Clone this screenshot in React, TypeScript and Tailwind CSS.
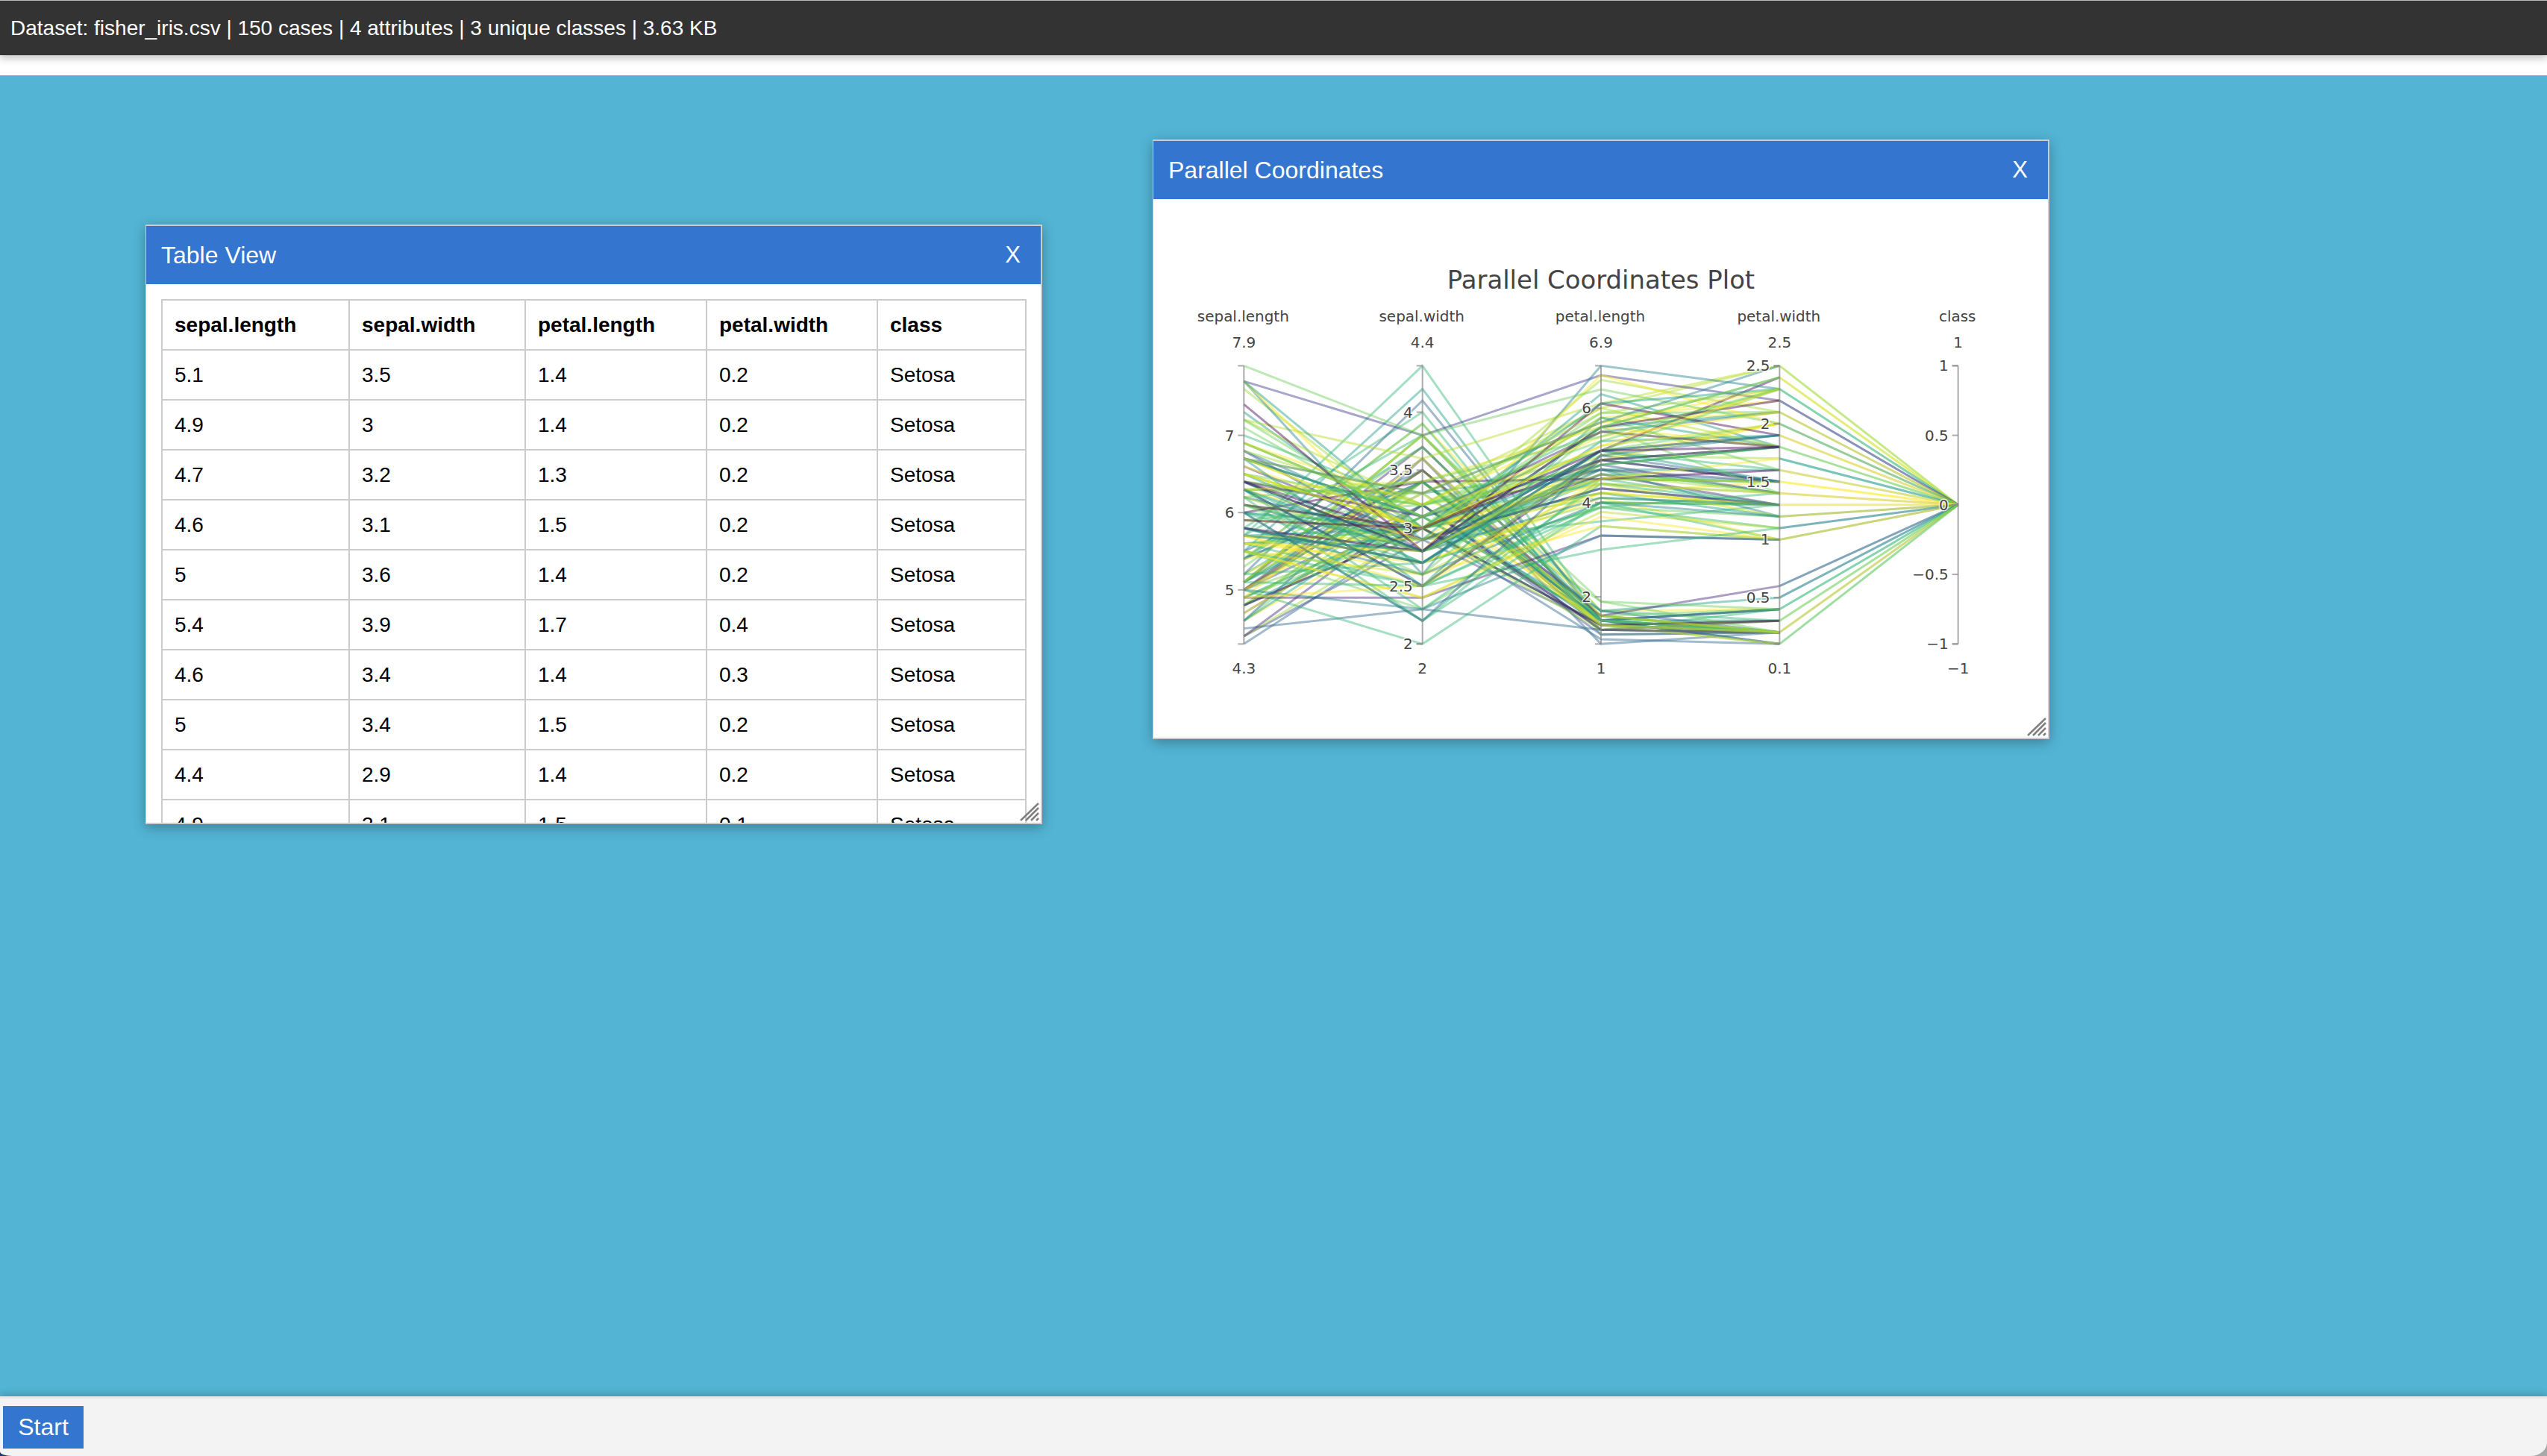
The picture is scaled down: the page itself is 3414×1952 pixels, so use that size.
const IRIS = `5.1,3.5,1.4,0.2 4.9,3,1.4,0.2 4.7,3.2,1.3,0.2 4.6,3.1,1.5,0.2 5,3.6,1.4,0.2 5.4,3.9,1.7,0.4 4.6,3.4,1.4,0.3 5,3.4,1.5,0.2 4.4,2.9,1.4,0.2 4.9,3.1,1.5,0.1 5.4,3.7,1.5,0.2 4.8,3.4,1.6,0.2 4.8,3,1.4,0.1 4.3,3,1.1,0.1 5.8,4,1.2,0.2 5.7,4.4,1.5,0.4 5.4,3.9,1.3,0.4 5.1,3.5,1.4,0.3 5.7,3.8,1.7,0.3 5.1,3.8,1.5,0.3 5.4,3.4,1.7,0.2 5.1,3.7,1.5,0.4 4.6,3.6,1,0.2 5.1,3.3,1.7,0.5 4.8,3.4,1.9,0.2 5,3,1.6,0.2 5,3.4,1.6,0.4 5.2,3.5,1.5,0.2 5.2,3.4,1.4,0.2 4.7,3.2,1.6,0.2 4.8,3.1,1.6,0.2 5.4,3.4,1.5,0.4 5.2,4.1,1.5,0.1 5.5,4.2,1.4,0.2 4.9,3.1,1.5,0.2 5,3.2,1.2,0.2 5.5,3.5,1.3,0.2 4.9,3.6,1.4,0.1 4.4,3,1.3,0.2 5.1,3.4,1.5,0.2 5,3.5,1.3,0.3 4.5,2.3,1.3,0.3 4.4,3.2,1.3,0.2 5,3.5,1.6,0.6 5.1,3.8,1.9,0.4 4.8,3,1.4,0.3 5.1,3.8,1.6,0.2 4.6,3.2,1.4,0.2 5.3,3.7,1.5,0.2 5,3.3,1.4,0.2 7,3.2,4.7,1.4 6.4,3.2,4.5,1.5 6.9,3.1,4.9,1.5 5.5,2.3,4,1.3 6.5,2.8,4.6,1.5 5.7,2.8,4.5,1.3 6.3,3.3,4.7,1.6 4.9,2.4,3.3,1 6.6,2.9,4.6,1.3 5.2,2.7,3.9,1.4 5,2,3.5,1 5.9,3,4.2,1.5 6,2.2,4,1 6.1,2.9,4.7,1.4 5.6,2.9,3.6,1.3 6.7,3.1,4.4,1.4 5.6,3,4.5,1.5 5.8,2.7,4.1,1 6.2,2.2,4.5,1.5 5.6,2.5,3.9,1.1 5.9,3.2,4.8,1.8 6.1,2.8,4,1.3 6.3,2.5,4.9,1.5 6.1,2.8,4.7,1.2 6.4,2.9,4.3,1.3 6.6,3,4.4,1.4 6.8,2.8,4.8,1.4 6.7,3,5,1.7 6,2.9,4.5,1.5 5.7,2.6,3.5,1 5.5,2.4,3.8,1.1 5.5,2.4,3.7,1 5.8,2.7,3.9,1.2 6,2.7,5.1,1.6 5.4,3,4.5,1.5 6,3.4,4.5,1.6 6.7,3.1,4.7,1.5 6.3,2.3,4.4,1.3 5.6,3,4.1,1.3 5.5,2.5,4,1.3 5.5,2.6,4.4,1.2 6.1,3,4.6,1.4 5.8,2.6,4,1.2 5,2.3,3.3,1 5.6,2.7,4.2,1.3 5.7,3,4.2,1.2 5.7,2.9,4.2,1.3 6.2,2.9,4.3,1.3 5.1,2.5,3,1.1 5.7,2.8,4.1,1.3 6.3,3.3,6,2.5 5.8,2.7,5.1,1.9 7.1,3,5.9,2.1 6.3,2.9,5.6,1.8 6.5,3,5.8,2.2 7.6,3,6.6,2.1 4.9,2.5,4.5,1.7 7.3,2.9,6.3,1.8 6.7,2.5,5.8,1.8 7.2,3.6,6.1,2.5 6.5,3.2,5.1,2 6.4,2.7,5.3,1.9 6.8,3,5.5,2.1 5.7,2.5,5,2 5.8,2.8,5.1,2.4 6.4,3.2,5.3,2.3 6.5,3,5.5,1.8 7.7,3.8,6.7,2.2 7.7,2.6,6.9,2.3 6,2.2,5,1.5 6.9,3.2,5.7,2.3 5.6,2.8,4.9,2 7.7,2.8,6.7,2 6.3,2.7,4.9,1.8 6.7,3.3,5.7,2.1 7.2,3.2,6,1.8 6.2,2.8,4.8,1.8 6.1,3,4.9,1.8 6.4,2.8,5.6,2.1 7.2,3,5.8,1.6 7.4,2.8,6.1,1.9 7.9,3.8,6.4,2 6.4,2.8,5.6,2.2 6.3,2.8,5.1,1.5 6.1,2.6,5.6,1.4 7.7,3,6.1,2.3 6.3,3.4,5.6,2.4 6.4,3.1,5.5,1.8 6,3,4.8,1.8 6.9,3.1,5.4,2.1 6.7,3.1,5.6,2.4 6.9,3.1,5.1,2.3 5.8,2.7,5.1,1.9 6.8,3.2,5.9,2.3 6.7,3.3,5.7,2.5 6.7,3,5.2,2.3 6.3,2.5,5,1.9 6.5,3,5.2,2 6.2,3.4,5.4,2.3 5.9,3,5.1,1.8`
  .split(" ")
  .map((r) => r.split(",").map(Number));

const PALETTE = [
  "#440154", "#482878", "#3e4989", "#31688e", "#26828e", "#26828e", "#1f9e89", "#1f9e89", "#35b779", "#35b779",
  "#35b779", "#6ece58", "#6ece58", "#6ece58", "#a0da39", "#b5de2b", "#d0e11c", "#fde725", "#fde725", "#fde725",
];
const OVERRIDE: Record<number, string> = { 117: "#3e3a89", 131: "#6ece58", 118: "#26828e", 41: "#31688e", 15: "#35b779", 33: "#1f9e89", 100: "#b5de2b", 109: "#b5de2b", 60: "#35b779", 13: "#31688e" };

// Colour of the visible line from each petal.width value to the class axis.
const FAN: [number, string][] = [
  [2.5, "#a0da39"], [2.4, "#d0e11c"], [2.3, "#35b779"], [2.2, "#3e4989"], [2.1, "#b5c52b"], [2, "#4fae5a"], [1.9, "#d8d030"],
  [1.8, "#6ece58"], [1.7, "#1f9e89"], [1.6, "#c9cf35"], [1.5, "#fde725"], [1.4, "#d8cf30"], [1.3, "#e6e23a"], [1.2, "#a0b82b"],
  [1.1, "#26828e"], [1, "#a8b91f"], [0.6, "#31688e"], [0.5, "#26828e"], [0.4, "#35b779"], [0.3, "#6ece58"], [0.2, "#b5c52b"], [0.1, "#5ec962"],
];

let seed = 20231;
const rnd = () => {
  seed = (seed * 1103515245 + 12345) & 0x7fffffff;
  return (seed >> 8) / 0x7fffff;
};
const lines = IRIS.map((row, i) => {
  const v = rnd();
  return { row, color: OVERRIDE[i] ?? PALETTE[Math.min(19, Math.floor(v * 20))] };
});

const AX = [120, 360, 600, 840, 1080];
const TOP = 224;
const BOT = 598;
const RANGES = [
  [4.3, 7.9],
  [2, 4.4],
  [1, 6.9],
  [0.1, 2.5],
  [-1, 1],
];
const yOf = (a: number, v: number) => BOT - ((v - RANGES[a][0]) / (RANGES[a][1] - RANGES[a][0])) * (BOT - TOP);

const AXES = [
  { name: "sepal.length", hi: "7.9", lo: "4.3", ticks: [[5, "5"], [6, "6"], [7, "7"]] },
  { name: "sepal.width", hi: "4.4", lo: "2", ticks: [[2, "2"], [2.5, "2.5"], [3, "3"], [3.5, "3.5"], [4, "4"]] },
  { name: "petal.length", hi: "6.9", lo: "1", ticks: [[2, "2"], [4, "4"], [6, "6"]] },
  { name: "petal.width", hi: "2.5", lo: "0.1", ticks: [[0.5, "0.5"], [1, "1"], [1.5, "1.5"], [2, "2"], [2.5, "2.5"]] },
  { name: "class", hi: "1", lo: "\u22121", ticks: [[-1, "\u22121"], [-0.5, "\u22120.5"], [0, "0"], [0.5, "0.5"], [1, "1"]] },
] as { name: string; hi: string; lo: string; ticks: [number, string][] }[];

const COLS = ["sepal.length", "sepal.width", "petal.length", "petal.width", "class"];
const WIDTHS = ["w-[251px]", "w-[236px]", "w-[243px]", "w-[229px]", "w-[199px]"];

function Handle() {
  return (
    <svg className="absolute right-0 bottom-0 h-[28px] w-[28px]" viewBox="0 0 28 28" fill="none" stroke="#808080" strokeWidth="2.5">
      <path d="M1 25 L25 2 M8 25 L25 8 M15 25 L25 15 M22 25 L25 22" />
    </svg>
  );
}

function TitleBar({ title }: { title: string }) {
  return (
    <div className="flex h-[78px] shrink-0 items-center justify-between bg-[#3475d0] pr-[27px] pl-[20px] text-[32px] text-white">
      <span>{title}</span>
      <span className="text-[31px]">X</span>
    </div>
  );
}

function ParCoords() {
  return (
    <svg className="block h-[724px] w-[1199px]" viewBox="0 0 1199 724" style={{ fontFamily: "'DejaVu Sans', Verdana, sans-serif" }}>
      <text x="600" y="120" textAnchor="middle" fontSize="34" fill="#444">
        Parallel Coordinates Plot
      </text>
      <g fill="none" strokeWidth="3" strokeOpacity="0.45">
        {lines.map((l, i) => (
          <polyline key={i} stroke={l.color} points={[0, 1, 2, 3].map((a) => `${AX[a]},${yOf(a, l.row[a])}`).join(" ")} />
        ))}
        {FAN.map(([v, c]) => (
          <line key={v} x1={AX[3]} y1={yOf(3, v)} x2={AX[4]} y2={yOf(4, 0)} stroke={c} strokeOpacity="0.6" />
        ))}
      </g>
      {AXES.map((ax, a) => (
        <g key={ax.name} fontSize="20" fill="#444">
          <line x1={AX[a]} x2={AX[a]} y1={TOP} y2={BOT} stroke="#888" strokeOpacity="0.7" strokeWidth="2" />
          <line x1={AX[a] - 8} x2={AX[a]} y1={TOP} y2={TOP} stroke="#888" strokeOpacity="0.7" strokeWidth="2" />
          <line x1={AX[a] - 8} x2={AX[a]} y1={BOT} y2={BOT} stroke="#888" strokeOpacity="0.7" strokeWidth="2" />
          <text x={AX[a] - 1} y="164" textAnchor="middle">{ax.name}</text>
          <text x={AX[a]} y="200" textAnchor="middle">{ax.hi}</text>
          <text x={AX[a]} y="638" textAnchor="middle">{ax.lo}</text>
          {ax.ticks.map(([v, label]) => (
            <g key={label}>
              <line x1={AX[a] - 8} x2={AX[a]} y1={yOf(a, v)} y2={yOf(a, v)} stroke="#888" strokeOpacity="0.7" strokeWidth="2" />
              <text x={AX[a] - 13} y={yOf(a, v) + 7} textAnchor="end" stroke="#fff" strokeOpacity="0.8" strokeWidth="3" className="[paint-order:stroke]">
                {label}
              </text>
            </g>
          ))}
        </g>
      ))}
    </svg>
  );
}

export default function App() {
  return (
    <div className="relative flex h-[1952px] w-[3414px] flex-col overflow-hidden bg-white font-['Liberation_Sans',Arial,sans-serif]">
      <div className="absolute bottom-0 left-0 h-[10px] w-[24px] bg-[#1e3a70]" />
      <div className="absolute right-0 bottom-0 h-[24px] w-[28px] bg-[#aaa]" />
      <div className="z-10 flex h-[74px] shrink-0 items-center border-t border-[#bbb] bg-[#333] pl-[14px] text-[28px] text-white shadow-[0_4px_10px_rgba(0,0,0,0.25)]">
        Dataset: fisher_iris.csv | 150 cases | 4 attributes | 3 unique classes | 3.63 KB
      </div>
      <div className="h-[27px] shrink-0 bg-white" />
      <main className="relative flex-1 bg-[#53b4d4]">
        <section className="absolute top-[200px] left-[195px] flex h-[804px] w-[1202px] flex-col overflow-hidden border-2 border-l border-[#ccc] bg-white shadow-[0_4px_16px_rgba(0,0,0,0.3)]">
          <TitleBar title="Table View" />
          <div className="overflow-hidden p-[20px] pr-0">
            <table className="table-fixed border-collapse text-[28px] text-black">
              <thead>
                <tr className="h-[67px]">
                  {COLS.map((c, i) => (
                    <th key={c} className={`${WIDTHS[i]} border-2 border-[#ccc] pl-[16px] text-left font-bold`}>
                      {c}
                    </th>
                  ))}
                </tr>
              </thead>
              <tbody>
                {IRIS.slice(0, 11).map((r, i) => (
                  <tr key={i} className="h-[67px]">
                    {r.map((v, j) => (
                      <td key={j} className="border-2 border-[#ccc] pl-[16px]">{v}</td>
                    ))}
                    <td className="border-2 border-[#ccc] pl-[16px]">Setosa</td>
                  </tr>
                ))}
              </tbody>
            </table>
          </div>
          <Handle />
        </section>
        <section className="absolute top-[86px] left-[1545px] flex h-[804px] w-[1202px] flex-col overflow-hidden border-2 border-l border-[#ccc] bg-white shadow-[0_4px_16px_rgba(0,0,0,0.3)]">
          <TitleBar title="Parallel Coordinates" />
          <ParCoords />
          <Handle />
        </section>
      </main>
      <footer className="z-10 flex h-[80px] shrink-0 items-start rounded-br-[22px_18px] rounded-bl-[16px_6px] border-t-[3px] border-[#e8e8e8] bg-[#f3f3f3] pt-[10px] pl-[4px] shadow-[0_-4px_10px_rgba(0,0,0,0.15)]">
        <button className="h-[57px] w-[108px] bg-[#3475d0] pb-[2px] text-[32px] text-white">Start</button>
      </footer>
    </div>
  );
}
